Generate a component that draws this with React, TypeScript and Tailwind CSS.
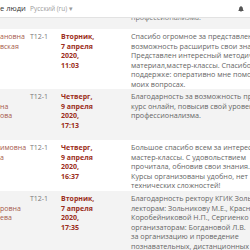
import { FaBell } from "react-icons/fa";

type Row = {
  name: string[];
  group: string;
  date: string[];
  comment: string[];
  height: string;
  shaded: boolean;
};

const rows: Row[] = [
  {
    name: ["ановна", "вская"],
    group: "Т12-1",
    date: ["Вторник,", "7 апреля", "2020,", "11:03"],
    comment: [
      "Спасибо огромное за представленную",
      "возможность расширить свои знания.",
      "Представлен интересный методический",
      "материал,мастер-классы. Спасибо за",
      "поддержке: оперативно мне помогли в",
      "моих вопросах.",
    ],
    height: "h-[60px]",
    shaded: false,
  },
  {
    name: ["", "на", "ова"],
    group: "Т12-1",
    date: ["Четверг,", "9 апреля", "2020,", "17:13"],
    comment: [
      "Благодарность за возможность пройти",
      "курс онлайн, повысив свой уровень",
      "профессионализма.",
    ],
    height: "h-[51px]",
    shaded: true,
  },
  {
    name: ["имовна", "а"],
    group: "Т12-1",
    date: ["Четверг,", "9 апреля", "2020,", "16:37"],
    comment: [
      "Большое спасибо всем за интересные",
      "мастер-классы. С удовольствием",
      "прочитала, обновив свои знания.",
      "Курсы организованы удобно, нет",
      "технических сложностей!",
    ],
    height: "h-[51px]",
    shaded: false,
  },
  {
    name: ["", "ровна", "ева"],
    group: "Т12-1",
    date: ["Вторник,", "7 апреля", "2020,", "17:35"],
    comment: [
      "Благодарность ректору КГИК Зольниковой",
      "лекторам: Зольникову М.Е., Красновой",
      "Коробейниковой Н.П., Сергиенко",
      "организаторам: Богдановой Л.В.",
      "за организацию и проведение",
      "познавательных, дистанционных курсов",
      "повышения квалификации.",
    ],
    height: "h-[80px]",
    shaded: true,
  },
];

function Lines({ lines }: { lines: string[] }) {
  return (
    <>
      {lines.map((l, i) => (
        <div key={i} className="h-[9.5px] whitespace-nowrap">
          {l}
        </div>
      ))}
    </>
  );
}

export default function App() {
  return (
    <div className="h-[250px] w-[250px] overflow-hidden bg-white font-['Open_Sans',sans-serif] text-[7px] leading-[9.5px]">
      <header className="flex h-[18px] items-center border-b border-[#e2e2e2] bg-white">
        <span className="w-[30px] whitespace-nowrap text-[7.5px] text-[#333]">е люди</span>
        <span className="text-[6.5px] text-[#9a9a9a]">Русский (ru) ▾</span>
        <FaBell className="ml-auto mr-[6px] h-[6px] w-[6px] text-[#555]" />
      </header>
      <div className="h-[11px] overflow-hidden bg-[#f3f3f3]">
        <div className="ml-[131px] mt-[-5px] whitespace-nowrap text-[7.2px] text-[#777]">
          профессионализма.
        </div>
      </div>
      {rows.map((r, i) => (
        <div
          key={i}
          className={`flex overflow-hidden pt-[3px] ${r.height} ${r.shaded ? "bg-[#f3f3f3]" : "bg-white"}`}
        >
          <div className="w-[30px] shrink-0 text-[#a65a4c]">
            <Lines lines={r.name} />
          </div>
          <div className="w-[31px] shrink-0 text-[#777]">{r.group}</div>
          <div className="w-[70px] shrink-0 font-bold text-[#9b2d20]">
            <Lines lines={r.date} />
          </div>
          <div className="shrink-0 text-[7.2px] text-[#666]">
            <Lines lines={r.comment} />
          </div>
        </div>
      ))}
    </div>
  );
}
